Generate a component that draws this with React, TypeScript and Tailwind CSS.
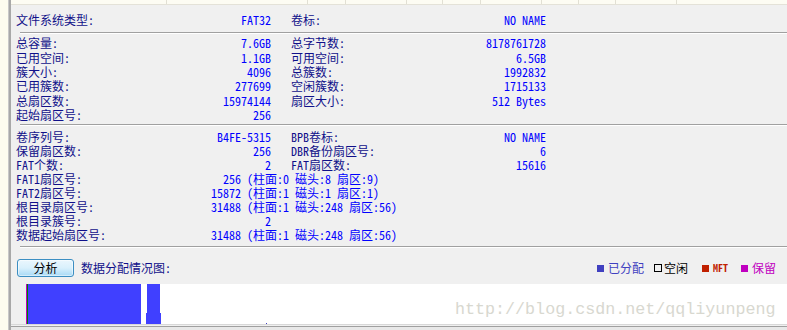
import React from 'react';

const FONT = "font-['Noto_Sans_Mono_CJK_SC','Liberation_Mono','Noto_Sans_CJK_SC',monospace]";

type Pair = [string, string];

const basic: [Pair, Pair | null][] = [
  [['总容量:', '7.6GB'], ['总字节数:', '8178761728']],
  [['已用空间:', '1.1GB'], ['可用空间:', '6.5GB']],
  [['簇大小:', '4096'], ['总簇数:', '1992832']],
  [['已用簇数:', '277699'], ['空闲簇数:', '1715133']],
  [['总扇区数:', '15974144'], ['扇区大小:', '512 Bytes']],
  [['起始扇区号:', '256'], null],
];

const boot: { l: Pair; r?: Pair; chs?: string }[] = [
  { l: ['卷序列号:', 'B4FE-5315'], r: ['BPB卷标:', 'NO NAME'] },
  { l: ['保留扇区数:', '256'], r: ['DBR备份扇区号:', '6'] },
  { l: ['FAT个数:', '2'], r: ['FAT扇区数:', '15616'] },
  { l: ['FAT1扇区号:', '256'], chs: '(柱面:0 磁头:8 扇区:9)' },
  { l: ['FAT2扇区号:', '15872'], chs: '(柱面:1 磁头:1 扇区:1)' },
  { l: ['根目录扇区号:', '31488'], chs: '(柱面:1 磁头:248 扇区:56)' },
  { l: ['根目录簇号:', '2'] },
  { l: ['数据起始扇区号:', '31488'], chs: '(柱面:1 磁头:248 扇区:56)' },
];

function Cell({ p, w = 'w-[255px]' }: { p: Pair; w?: string }) {
  return (
    <div className={`${w} flex justify-between`}>
      <span className="text-[#10108a]">{p[0]}</span>
      <span className="text-[#0000ff]">{p[1]}</span>
    </div>
  );
}

function Sep() {
  return <div className="ml-[9px] border-t border-[#a0a0a0] border-b border-b-white" />;
}

const headerLines = [167, 308, 346, 407, 443, 481, 542, 579, 616, 677];

export default function App() {
  return (
    <div className={`w-[787px] h-[330px] flex bg-[#f0f0f0] overflow-hidden text-[12px] leading-[14.33px] ${FONT}`}>
      <div className="w-[9px] bg-[#fdfcef] border-r border-[#c8c8c8]" />
      <div className="w-[2px] bg-[#a8a8a8]" />
      <div className="flex-1 flex flex-col">
        {/* list header remnant */}
        <div className="h-[5px] bg-[#fdfcf3] border-b border-[#e4e2d8] relative">
          {headerLines.map((x) => (
            <div key={x} className="absolute top-0 h-[4px] w-px bg-[#e2e0d4]" style={{ left: x - 12 }} />
          ))}
        </div>

        <div className="pl-[5px] pt-[8px] pb-[5px] flex">
          <Cell p={['文件系统类型:', 'FAT32']} />
          <div className="ml-[20px]">
            <Cell p={['卷标:', 'NO NAME']} />
          </div>
        </div>
        <Sep />

        <div className="pl-[5px] pt-[2px] pb-[2px]">
          {basic.map(([l, r], i) => (
            <div key={i} className="flex">
              <Cell p={l} />
              {r && (
                <div className="ml-[20px]">
                  <Cell p={r} />
                </div>
              )}
            </div>
          ))}
        </div>
        <Sep />

        <div className="pl-[5px] pt-[4px] pb-[4px] leading-[14px]">
          {boot.map((row, i) => (
            <div key={i} className="flex whitespace-nowrap">
              {row.chs ? (
                <>
                  <Cell p={row.l} w="w-[225px]" />
                  <span className="pl-[6px] text-[#0000ff]">{row.chs}</span>
                </>
              ) : (
                <>
                  <Cell p={row.l} />
                  {row.r && (
                    <div className="ml-[20px]">
                      <Cell p={row.r} />
                    </div>
                  )}
                </>
              )}
            </div>
          ))}
        </div>
        <Sep />

        <div className="flex items-center pl-[6px] pr-[11px] pt-[11px] pb-[7px]">
          <button className="w-[57px] h-[18px] rounded-[3px] border border-[#3c8ec2] bg-gradient-to-b from-[#eaf6fd] via-[#d9f0fc] to-[#a7d9f5] text-black text-[12px] leading-[16px] shadow-[inset_0_0_0_1px_#ffffff80]">
            分析
          </button>
          <span className="ml-[7px] text-[#10108a]">数据分配情况图:</span>
          <div className="ml-auto flex items-center">
            <span className="w-[7px] h-[7px] bg-[#4040c0]" />
            <span className="ml-[4px] text-[#4040c0]">已分配</span>
            <span className="ml-[10px] w-[8px] h-[8px] border border-black" />
            <span className="ml-[2px] text-black">空闲</span>
            <span className="ml-[14px] w-[7px] h-[7px] bg-[#c02000]" />
            <span className="ml-[4px] text-[#c02000] text-[10px] font-bold">MFT</span>
            <span className="ml-[13px] w-[7px] h-[7px] bg-[#c000c0]" />
            <span className="ml-[4px] text-[#c000c0]">保留</span>
          </div>
        </div>

        <div className="ml-[15px] h-[40px] bg-white relative">
          <svg width="760" height="40" className="block">
            <rect x="0" y="0" width="1" height="40" fill="#c000c0" />
            <rect x="1" y="0" width="1" height="40" fill="#008000" />
            <rect x="2" y="0" width="113" height="40" fill="#4040ff" />
            <rect x="121" y="0" width="13" height="29" fill="#4040ff" />
            <rect x="120" y="29" width="15" height="11" fill="#4040ff" />
            <rect x="240" y="39" width="1" height="1" fill="#4040c0" />
          </svg>
          <span className="absolute left-[429px] top-[16px] text-[16.7px] leading-[20px] text-[#d8d8d0] font-['Liberation_Mono',monospace]">
            http://blog.csdn.net/qqliyunpeng
          </span>
        </div>
        <div className="h-px bg-[#d8d8d8]" />
        <div className="h-px bg-[#f0f0f0]" />
        <div className="h-px bg-[#a0a0a0]" />
        <div className="flex-1 bg-[#e8e8e8]" />
      </div>
    </div>
  );
}
